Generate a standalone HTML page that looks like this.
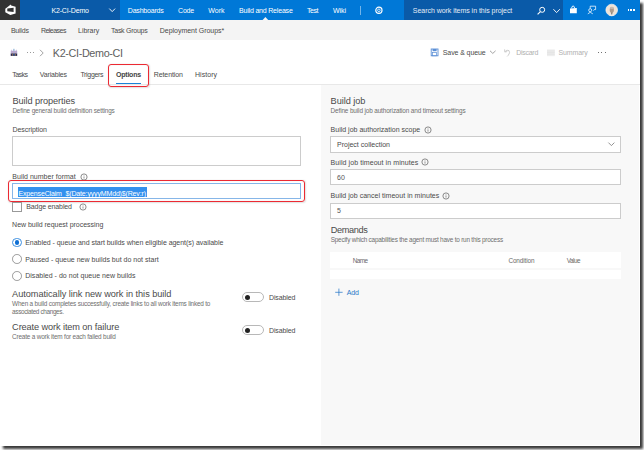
<!DOCTYPE html>
<html><head><meta charset="utf-8"><style>
html,body{margin:0;padding:0;width:644px;height:450px;overflow:hidden;background:#fff;font-family:"Liberation Sans", sans-serif}
body>div{position:absolute}
.t{line-height:1;white-space:nowrap}
</style></head><body>
<div style="left:0px;top:0px;width:640px;height:446px;background:#fff;box-shadow:2.5px 2.5px 2.5px rgba(0,0,0,0.78)"></div>
<div style="left:0px;top:0px;width:640px;height:19.7px;background:#0078d7"></div>
<div style="left:0px;top:0px;width:19.8px;height:19.7px;background:#333333"></div>
<div style="left:19.8px;top:0px;width:100.2px;height:19.7px;background:#0a5aa8"></div>
<div style="left:404.3px;top:0px;width:158.3px;height:19.7px;background:#0a5aa8"></div>
<div style="left:0px;top:19.7px;width:640px;height:20px;background:#f4f4f4"></div>
<div style="left:0px;top:83.6px;width:640px;height:1px;background:#e8e8e8"></div>
<div style="left:320.5px;top:84.6px;width:318.5px;height:360.5px;background:#f8f8f8"></div>
<svg style="position:absolute;left:0px;top:0px;" width="20" height="20" viewBox="0 0 20 20"><path d="M5.3 8.7 L9.8 5.3 L10.5 4.5 L11.2 5.6 L15.6 6.7 L15.6 13.5 L11.2 14.8 L10.3 15 L5.3 12.2 Z" fill="#fff"/><path d="M7.3 8.6 L13.6 7.8 L13.6 12 L7.3 11.2 Z" fill="#333"/></svg>
<svg style="position:absolute;left:105px;top:5px;" width="14" height="10" viewBox="0 0 14 10"><path d="M4.3 3.6 L7.2 6.6 L10.1 3.6" fill="none" stroke="#fff" stroke-width="0.9"/></svg>
<svg style="position:absolute;left:260px;top:15px;" width="12" height="6" viewBox="0 0 12 6"><path d="M2.4 5.2 L5.4 2.1 L8.4 5.2 Z" fill="#f4f4f4"/></svg>
<div style="left:360px;top:5.6px;width:0.8px;height:9.4px;background:rgba(255,255,255,0.45)"></div>
<svg style="position:absolute;left:372px;top:3px;" width="14" height="14" viewBox="0 0 14 14"><circle cx="6.9" cy="7.3" r="3.1" fill="none" stroke="#fff" stroke-width="1.2"/><circle cx="6.9" cy="7.3" r="1.3" fill="none" stroke="#fff" stroke-width="0.8"/></svg>
<svg style="position:absolute;left:535px;top:5px;" width="14" height="12" viewBox="0 0 14 12"><circle cx="7.2" cy="4.8" r="2.5" fill="none" stroke="#fff" stroke-width="1"/><path d="M5.4 6.6 L2.6 9.4" stroke="#fff" stroke-width="1.1"/></svg>
<svg style="position:absolute;left:550px;top:5px;" width="14" height="12" viewBox="0 0 14 12"><path d="M3.4 4.2 L6.6 7.6 L9.8 4.2" fill="none" stroke="#fff" stroke-width="0.9"/></svg>
<svg style="position:absolute;left:567px;top:4px;" width="12" height="12" viewBox="0 0 12 12"><path d="M4.6 4.3 Q4.8 2 6.1 2 Q7.4 2 7.6 4.1" fill="none" stroke="#fff" stroke-width="0.9"/><path d="M3 4.6 L9.8 3.9 L9.8 9.3 L3 9.3 Z" fill="#fff"/></svg>
<svg style="position:absolute;left:585px;top:4px;" width="13" height="12" viewBox="0 0 13 12"><path d="M5.2 4.6 L5.2 2.2 L10.6 2.2 L10.6 5.6 L9.2 5.6 L8.4 6.6" fill="none" stroke="#fff" stroke-width="0.75"/><circle cx="5.2" cy="6.2" r="1.5" fill="none" stroke="#fff" stroke-width="0.75"/><path d="M2.8 9.8 Q5.2 6.8 7.8 9.8" fill="none" stroke="#fff" stroke-width="0.75"/></svg>
<svg style="position:absolute;left:604px;top:3px;" width="16" height="15" viewBox="0 0 16 15"><circle cx="7.7" cy="7" r="5.8" fill="#f0e3d6" stroke="#faf6f2" stroke-width="0.7"/><ellipse cx="7.8" cy="6.9" rx="2.1" ry="2.8" fill="#ad9a8c"/><ellipse cx="7.9" cy="4.9" rx="2" ry="1.1" fill="#c7bcb3"/><path d="M5.2 12.2 Q7.6 9.4 10.4 12 L9.6 12.7 Q7.6 13.2 5.8 12.8 Z" fill="#e9e9ea"/><path d="M7.2 9.6 L8.4 9.6 L8.2 11.6 L7.4 11.6Z" fill="#6e645c"/></svg>
<div style="left:627.55px;top:9.0px;width:1.7px;height:1.7px;background:#fff"></div>
<div style="left:630.4499999999999px;top:9.0px;width:1.7px;height:1.7px;background:#fff"></div>
<div style="left:633.35px;top:9.0px;width:1.7px;height:1.7px;background:#fff"></div>
<div class="t" style="left:51.40px;top:7px;font-size:7.0px;color:#ffffff;font-weight:normal;letter-spacing:-0.144px;">K2-CI-Demo</div>
<div class="t" style="left:127.80px;top:7px;font-size:7.0px;color:#ffffff;font-weight:normal;letter-spacing:-0.194px;">Dashboards</div>
<div class="t" style="left:178.00px;top:7px;font-size:7.0px;color:#ffffff;font-weight:normal;letter-spacing:-0.179px;">Code</div>
<div class="t" style="left:208.20px;top:7px;font-size:7.0px;color:#ffffff;font-weight:normal;letter-spacing:0.060px;">Work</div>
<div class="t" style="left:307.00px;top:7px;font-size:7.0px;color:#ffffff;font-weight:normal;letter-spacing:-0.446px;">Test</div>
<div class="t" style="left:333.00px;top:7px;font-size:7.0px;color:#ffffff;font-weight:normal;letter-spacing:-0.072px;">Wiki</div>
<div class="t" style="left:239.00px;top:7px;font-size:7.0px;color:#ffffff;font-weight:normal;letter-spacing:-0.189px;">Build and Release</div>
<div class="t" style="left:412.80px;top:7px;font-size:7.0px;color:#e4ecf6;font-weight:normal;letter-spacing:-0.039px;">Search work items in this project</div>
<div class="t" style="left:10.90px;top:27px;font-size:7.0px;color:#4a4a4a;font-weight:normal;letter-spacing:-0.214px;">Builds</div>
<div class="t" style="left:40.90px;top:27px;font-size:7.0px;color:#4a4a4a;font-weight:normal;letter-spacing:-0.526px;">Releases</div>
<div class="t" style="left:78.00px;top:27px;font-size:7.0px;color:#4a4a4a;font-weight:normal;letter-spacing:-0.017px;">Library</div>
<div class="t" style="left:111.00px;top:27px;font-size:7.0px;color:#4a4a4a;font-weight:normal;letter-spacing:-0.259px;">Task Groups</div>
<div class="t" style="left:159.80px;top:27px;font-size:7.0px;color:#4a4a4a;font-weight:normal;letter-spacing:-0.034px;">Deployment Groups*</div>
<svg style="position:absolute;left:9px;top:47px;" width="10" height="10" viewBox="0 0 10 10"><rect x="1.7" y="3.8" width="6.5" height="2.8" fill="#b9a9cf"/><path d="M1.7 3.8 L2.6 2.6 L3.4 3.8Z M6.5 3.8 L7.3 2.6 L8.2 3.8Z" fill="#c4b4d8"/><rect x="4.3" y="1.8" width="1.2" height="2.2" fill="#8fb3d6"/><rect x="1.7" y="6.5" width="6.5" height="2.4" fill="#2e2a52"/><rect x="3.1" y="6.5" width="0.9" height="2.4" fill="#8a6f5a"/><rect x="4.6" y="6.5" width="0.9" height="2.4" fill="#4a78b0"/><rect x="6.1" y="6.5" width="0.9" height="2.4" fill="#8a6f5a"/></svg>
<div style="left:26.950000000000003px;top:52.1px;width:1.3px;height:1.3px;background:#7a7a7a;border-radius:50%"></div>
<div style="left:29.75px;top:52.1px;width:1.3px;height:1.3px;background:#7a7a7a;border-radius:50%"></div>
<div style="left:32.550000000000004px;top:52.1px;width:1.3px;height:1.3px;background:#7a7a7a;border-radius:50%"></div>
<svg style="position:absolute;left:38px;top:48px;" width="8" height="10" viewBox="0 0 8 10"><path d="M2 1.8 L5.2 5 L2 8.2" fill="none" stroke="#8a8a8a" stroke-width="0.8"/></svg>
<div class="t" style="left:52.80px;top:48px;font-size:10.8px;color:#606060;font-weight:normal;letter-spacing:-0.351px;">K2-CI-Demo-CI</div>
<div class="t" style="left:12.20px;top:71px;font-size:7.0px;color:#4a4a4a;font-weight:normal;letter-spacing:-0.523px;">Tasks</div>
<div class="t" style="left:39.80px;top:71px;font-size:7.0px;color:#4a4a4a;font-weight:normal;letter-spacing:-0.171px;">Variables</div>
<div class="t" style="left:80.40px;top:71px;font-size:7.0px;color:#4a4a4a;font-weight:normal;letter-spacing:-0.316px;">Triggers</div>
<div class="t" style="left:153.70px;top:71px;font-size:7.0px;color:#4a4a4a;font-weight:normal;letter-spacing:-0.083px;">Retention</div>
<div class="t" style="left:195.00px;top:71px;font-size:7.0px;color:#4a4a4a;font-weight:normal;letter-spacing:0.037px;">History</div>
<div class="t" style="left:116.00px;top:71px;font-size:7.0px;color:#444;font-weight:bold;letter-spacing:-0.223px;">Options</div>
<div style="left:116px;top:82.7px;width:25.2px;height:1.3px;background:#1a82d9"></div>
<svg style="position:absolute;left:429px;top:47px;" width="11" height="10" viewBox="0 0 11 10"><rect x="2.2" y="2" width="6.8" height="6.8" fill="none" stroke="#5b8fd6" stroke-width="0.9"/><rect x="3.6" y="2" width="4" height="2.2" fill="#5b8fd6"/><rect x="3.6" y="5.6" width="4" height="3.2" fill="none" stroke="#5b8fd6" stroke-width="0.7"/></svg>
<div class="t" style="left:442.80px;top:49px;font-size:7.0px;color:#4a4a4a;font-weight:normal;letter-spacing:-0.098px;">Save &amp; queue</div>
<svg style="position:absolute;left:488px;top:48px;" width="9" height="8" viewBox="0 0 9 8"><path d="M2 2.8 L4.8 5.4 L7.6 2.8" fill="none" stroke="#8a8a8a" stroke-width="0.8"/></svg>
<svg style="position:absolute;left:502px;top:47px;" width="10" height="11" viewBox="0 0 10 11"><path d="M2.6 2.4 L2.8 5 L5.2 4.6 M2.9 4.8 Q4.8 2.2 7 3.6 Q8.6 5.6 6.2 8.4 L5.2 9.4" fill="none" stroke="#c8c8c8" stroke-width="0.9"/></svg>
<div class="t" style="left:516.30px;top:49px;font-size:7.0px;color:#b0b0b0;font-weight:normal;letter-spacing:-0.288px;">Discard</div>
<svg style="position:absolute;left:546px;top:48px;" width="10" height="9" viewBox="0 0 10 9"><rect x="1" y="1.4" width="7.8" height="6.8" fill="#eeeeee"/><path d="M1 3 H8.8 M1 4.6 H8.8 M1 6.2 H8.8" stroke="#dddddd" stroke-width="0.6"/></svg>
<div class="t" style="left:558.50px;top:49px;font-size:7.0px;color:#b0b0b0;font-weight:normal;letter-spacing:-0.108px;">Summary</div>
<div style="left:597.8px;top:51.9px;width:1.3px;height:1.3px;background:#444;border-radius:50%"></div>
<div style="left:601.1999999999999px;top:51.9px;width:1.3px;height:1.3px;background:#444;border-radius:50%"></div>
<div style="left:604.6px;top:51.9px;width:1.3px;height:1.3px;background:#444;border-radius:50%"></div>
<div class="t" style="left:12.40px;top:97px;font-size:9.2px;color:#4a4a4a;font-weight:normal;letter-spacing:-0.075px;">Build properties</div>
<div class="t" style="left:12.40px;top:108px;font-size:6.4px;color:#6e6e6e;font-weight:normal;letter-spacing:-0.143px;">Define general build definition settings</div>
<div class="t" style="left:12.40px;top:126px;font-size:7.0px;color:#4a4a4a;font-weight:normal;letter-spacing:-0.041px;">Description</div>
<div style="left:12.3px;top:136.4px;width:288.4px;height:29.6px;border:1px solid #cccccc;box-sizing:border-box;background:#fff"></div>
<div class="t" style="left:12.30px;top:173px;font-size:7.0px;color:#4a4a4a;font-weight:normal;letter-spacing:0.021px;">Build number format</div>
<svg style="position:absolute;left:79.7px;top:172.5px;" width="8" height="8" viewBox="0 0 8 8"><circle cx="4" cy="4" r="3.1" fill="none" stroke="#707070" stroke-width="0.8"/><path d="M4 3.4 V5.6" stroke="#707070" stroke-width="0.7"/><circle cx="4" cy="2.4" r="0.4" fill="#707070"/></svg>
<div style="left:11.6px;top:182.9px;width:289.4px;height:16.6px;border:1.3px solid #86b6e8;border-bottom-width:1.7px;box-sizing:border-box;background:#fff"></div>
<div style="left:18px;top:187px;width:128.7px;height:9.9px;background:#3390ee"></div>
<div class="t" style="left:18.50px;top:190px;font-size:7.0px;color:#fff;font-weight:normal;letter-spacing:-0.154px;">ExpenseClaim_$(Date:yyyyMMdd)$(Rev:r)</div>
<div style="left:8.1px;top:180.4px;width:296.5px;height:21.4px;border:1.7px solid #ec2a33;border-radius:3px;box-sizing:border-box;box-shadow:inset 0 0 1.5px rgba(0,40,40,0.12),0.8px 0.8px 1.5px rgba(0,0,0,0.12)"></div>
<div style="left:108.1px;top:64.1px;width:41.1px;height:22.8px;border:1.7px solid #ec2a33;border-radius:3px;box-sizing:border-box;box-shadow:inset 0 0 1.5px rgba(0,40,40,0.12),0.8px 0.8px 1.5px rgba(0,0,0,0.12)"></div>
<div style="left:12.3px;top:202.4px;width:9.3px;height:9.3px;border:1px solid #999;box-sizing:border-box;background:#fff"></div>
<div class="t" style="left:26.30px;top:203px;font-size:7.0px;color:#4a4a4a;font-weight:normal;letter-spacing:-0.117px;">Badge enabled</div>
<svg style="position:absolute;left:79.3px;top:203.3px;" width="8" height="8" viewBox="0 0 8 8"><circle cx="4" cy="4" r="3.1" fill="none" stroke="#707070" stroke-width="0.8"/><path d="M4 3.4 V5.6" stroke="#707070" stroke-width="0.7"/><circle cx="4" cy="2.4" r="0.4" fill="#707070"/></svg>
<div class="t" style="left:12.10px;top:221px;font-size:7.0px;color:#4a4a4a;font-weight:normal;letter-spacing:-0.023px;">New build request processing</div>
<div class="t" style="left:25.20px;top:239px;font-size:7.0px;color:#4a4a4a;font-weight:normal;letter-spacing:-0.036px;">Enabled - queue and start builds when eligible agent(s) available</div>
<div class="t" style="left:25.20px;top:256px;font-size:7.0px;color:#4a4a4a;font-weight:normal;letter-spacing:0.010px;">Paused - queue new builds but do not start</div>
<div class="t" style="left:25.20px;top:272px;font-size:7.0px;color:#4a4a4a;font-weight:normal;letter-spacing:0.026px;">Disabled - do not queue new builds</div>
<div style="left:12.1px;top:237.6px;width:9.7px;height:9.7px;border:1px solid #3c8fe0;border-radius:50%;box-sizing:border-box;background:#fff"></div>
<div style="left:14.5px;top:240px;width:4.9px;height:4.9px;border-radius:50%;background:#0f6fd4"></div>
<div style="left:12.1px;top:254.25000000000003px;width:9.7px;height:9.7px;border:1px solid #999;border-radius:50%;box-sizing:border-box;background:#fff"></div>
<div style="left:12.1px;top:271.15px;width:9.7px;height:9.7px;border:1px solid #999;border-radius:50%;box-sizing:border-box;background:#fff"></div>
<div class="t" style="left:12.10px;top:290px;font-size:9.2px;color:#4a4a4a;font-weight:normal;letter-spacing:-0.037px;">Automatically link new work in this build</div>
<div class="t" style="left:12.10px;top:301px;font-size:6.4px;color:#6e6e6e;font-weight:normal;letter-spacing:-0.193px;">When a build completes successfully, create links to all work items linked to</div>
<div class="t" style="left:12.10px;top:309px;font-size:6.4px;color:#6e6e6e;font-weight:normal;letter-spacing:-0.358px;">associated changes.</div>
<div class="t" style="left:12.10px;top:323px;font-size:9.2px;color:#4a4a4a;font-weight:normal;letter-spacing:-0.101px;">Create work item on failure</div>
<div class="t" style="left:12.10px;top:334px;font-size:6.4px;color:#6e6e6e;font-weight:normal;letter-spacing:-0.182px;">Create a work item for each failed build</div>
<div style="left:242.2px;top:292.4px;width:21.6px;height:10px;border:1px solid #b8b8b8;border-radius:5px;box-sizing:border-box;background:#fff"></div>
<div style="left:245px;top:294.9px;width:5px;height:5px;border-radius:50%;background:#222"></div>
<div class="t" style="left:269.00px;top:294px;font-size:7.0px;color:#4a4a4a;font-weight:normal;letter-spacing:-0.134px;">Disabled</div>
<div style="left:242.2px;top:325.2px;width:21.6px;height:10px;border:1px solid #b8b8b8;border-radius:5px;box-sizing:border-box;background:#fff"></div>
<div style="left:245px;top:327.7px;width:5px;height:5px;border-radius:50%;background:#222"></div>
<div class="t" style="left:269.00px;top:327px;font-size:7.0px;color:#4a4a4a;font-weight:normal;letter-spacing:-0.134px;">Disabled</div>
<div class="t" style="left:330.60px;top:97px;font-size:9.2px;color:#4a4a4a;font-weight:normal;letter-spacing:-0.049px;">Build job</div>
<div class="t" style="left:330.60px;top:108px;font-size:6.4px;color:#6e6e6e;font-weight:normal;letter-spacing:-0.128px;">Define build job authorization and timeout settings</div>
<div class="t" style="left:330.60px;top:126px;font-size:7.0px;color:#4a4a4a;font-weight:normal;letter-spacing:0.003px;">Build job authorization scope</div>
<svg style="position:absolute;left:423.7px;top:125.69999999999999px;" width="8" height="8" viewBox="0 0 8 8"><circle cx="4" cy="4" r="3.1" fill="none" stroke="#707070" stroke-width="0.8"/><path d="M4 3.4 V5.6" stroke="#707070" stroke-width="0.7"/><circle cx="4" cy="2.4" r="0.4" fill="#707070"/></svg>
<div style="left:330.2px;top:136.3px;width:290.4px;height:16.4px;border:1px solid #cccccc;box-sizing:border-box;background:#fff"></div>
<div class="t" style="left:337.00px;top:141px;font-size:7.0px;color:#4a4a4a;font-weight:normal;letter-spacing:0.005px;">Project collection</div>
<svg style="position:absolute;left:606px;top:140px;" width="10" height="8" viewBox="0 0 10 8"><path d="M2.4 2.6 L5.4 5.6 L8.4 2.6" fill="none" stroke="#777" stroke-width="0.8"/></svg>
<div class="t" style="left:330.60px;top:159px;font-size:7.0px;color:#4a4a4a;font-weight:normal;letter-spacing:0.074px;">Build job timeout in minutes</div>
<svg style="position:absolute;left:421.3px;top:158.3px;" width="8" height="8" viewBox="0 0 8 8"><circle cx="4" cy="4" r="3.1" fill="none" stroke="#707070" stroke-width="0.8"/><path d="M4 3.4 V5.6" stroke="#707070" stroke-width="0.7"/><circle cx="4" cy="2.4" r="0.4" fill="#707070"/></svg>
<div style="left:330.2px;top:169px;width:290.4px;height:16.3px;border:1px solid #cccccc;box-sizing:border-box;background:#fff"></div>
<div class="t" style="left:337.00px;top:174px;font-size:7.0px;color:#555;font-weight:normal;letter-spacing:0.000px;">60</div>
<div class="t" style="left:330.60px;top:192px;font-size:7.0px;color:#4a4a4a;font-weight:normal;letter-spacing:0.027px;">Build job cancel timeout in minutes</div>
<svg style="position:absolute;left:442.4px;top:191.8px;" width="8" height="8" viewBox="0 0 8 8"><circle cx="4" cy="4" r="3.1" fill="none" stroke="#707070" stroke-width="0.8"/><path d="M4 3.4 V5.6" stroke="#707070" stroke-width="0.7"/><circle cx="4" cy="2.4" r="0.4" fill="#707070"/></svg>
<div style="left:330.2px;top:202.5px;width:290.4px;height:16px;border:1px solid #cccccc;box-sizing:border-box;background:#fff"></div>
<div class="t" style="left:337.00px;top:207px;font-size:7.0px;color:#555;font-weight:normal;letter-spacing:0.000px;">5</div>
<div class="t" style="left:330.70px;top:226px;font-size:9.2px;color:#4a4a4a;font-weight:normal;letter-spacing:-0.346px;">Demands</div>
<div class="t" style="left:330.70px;top:237px;font-size:6.4px;color:#6e6e6e;font-weight:normal;letter-spacing:-0.211px;">Specify which capabilities the agent must have to run this process</div>
<div style="left:330.1px;top:252.2px;width:290.5px;height:15.7px;background:#fff"></div>
<div style="left:330.1px;top:269.8px;width:290.5px;height:8.8px;background:#fff"></div>
<div class="t" style="left:352.70px;top:258px;font-size:6.4px;color:#6a6a6a;font-weight:normal;letter-spacing:-0.592px;">Name</div>
<div class="t" style="left:508.40px;top:258px;font-size:6.4px;color:#6a6a6a;font-weight:normal;letter-spacing:-0.105px;">Condition</div>
<div class="t" style="left:566.70px;top:258px;font-size:6.4px;color:#6a6a6a;font-weight:normal;letter-spacing:-0.473px;">Value</div>
<svg style="position:absolute;left:333px;top:288px;" width="12" height="9" viewBox="0 0 12 9"><path d="M5.9 0.6 V7.8 M2.2 4.3 H9.6" stroke="#2a78c8" stroke-width="0.75"/></svg>
<div class="t" style="left:346.70px;top:289px;font-size:7.0px;color:#2a78c8;font-weight:normal;letter-spacing:-0.076px;">Add</div>
</body></html>
